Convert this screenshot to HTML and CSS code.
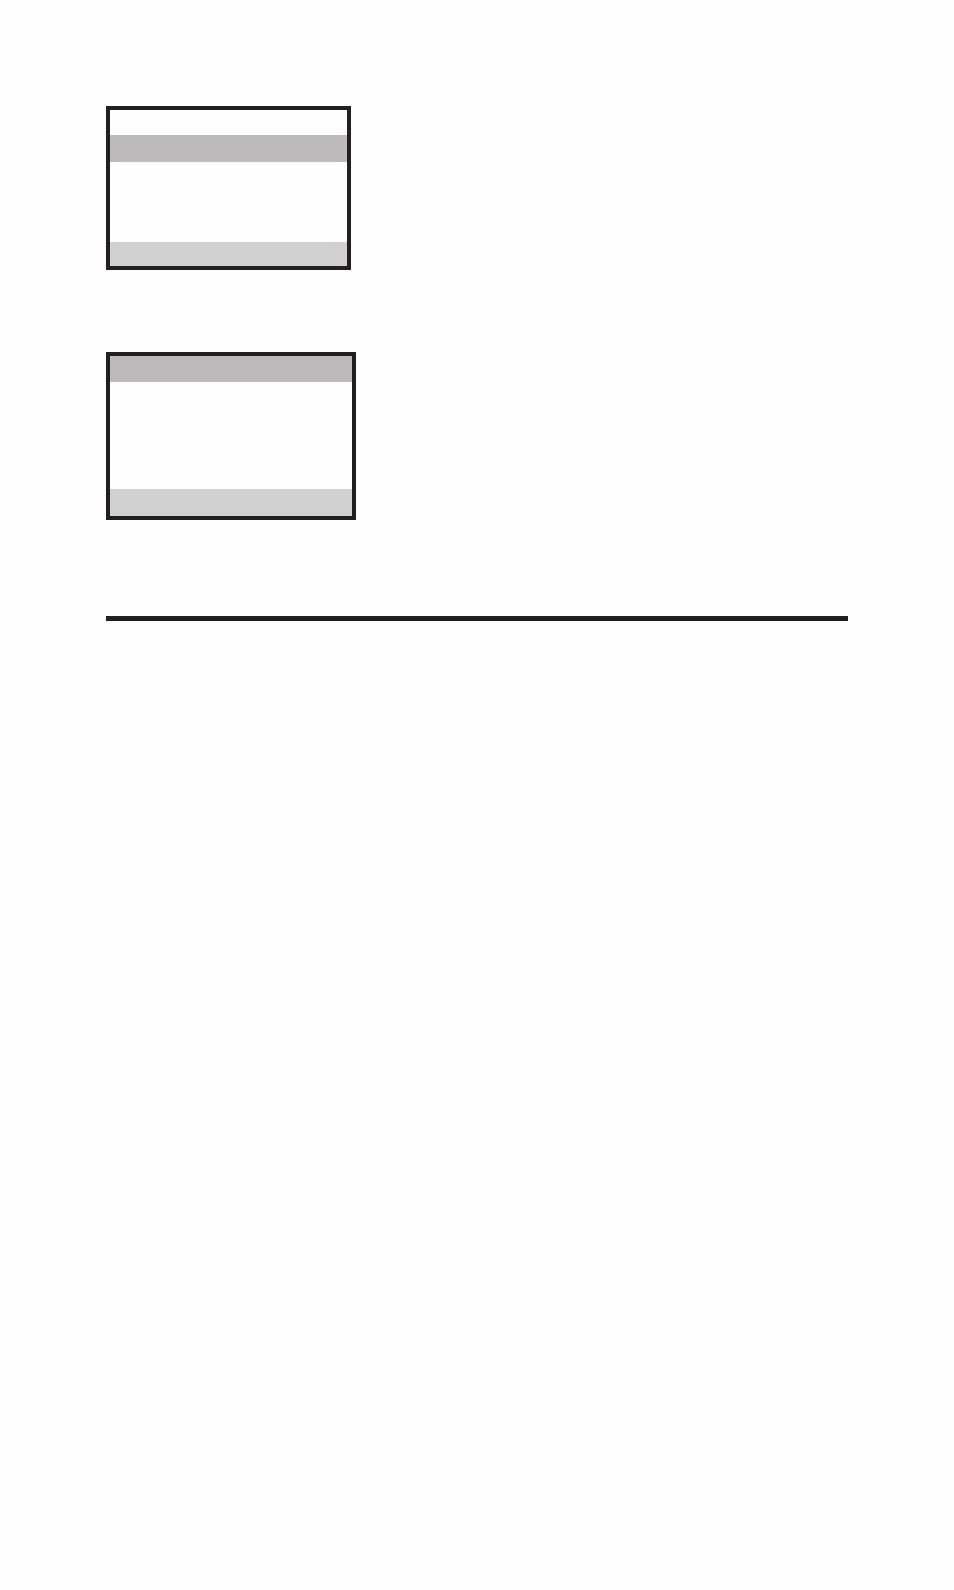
FILE: index.html
```html
<!DOCTYPE html>
<html lang="en">
<head>
  <meta charset="utf-8">
  <meta name="viewport" content="width=device-width, initial-scale=1">
  <title>Display screens</title>
  <link rel="stylesheet" href="styles.css">
</head>
<body>
  <main class="page">
    <div class="screen screen-menu">
      <div class="row"></div>
      <div class="row highlight"></div>
      <div class="row"></div>
      <div class="row softkeys"></div>
    </div>
    <div class="screen screen-list">
      <div class="row highlight"></div>
      <div class="row"></div>
      <div class="row softkeys"></div>
    </div>
    <hr class="divider">
  </main>
</body>
</html>
```

FILE: styles.css
```css
body {
  margin: 0;
  background: #fefefe;
}

.page {
  box-sizing: border-box;
  min-height: 100vh;
  padding: 106px;
}

.screen {
  display: grid;
  box-sizing: border-box;
  max-width: 100%;
  border: 4px solid #231f20;
  background: #fefefe;
}

.screen-menu {
  width: 245px;
  grid-template-rows: 25px 27px 80px 24px;
  margin-bottom: 82px;
}

.screen-list {
  width: 250px;
  grid-template-rows: 26px 107px 27px;
  margin-bottom: 96px;
}

.highlight {
  background: #bcbabb;
}

.softkeys {
  background: #d1d1d1;
}

.divider {
  height: 5px;
  margin: 0;
  border: 0;
  background: #231f20;
}
```
